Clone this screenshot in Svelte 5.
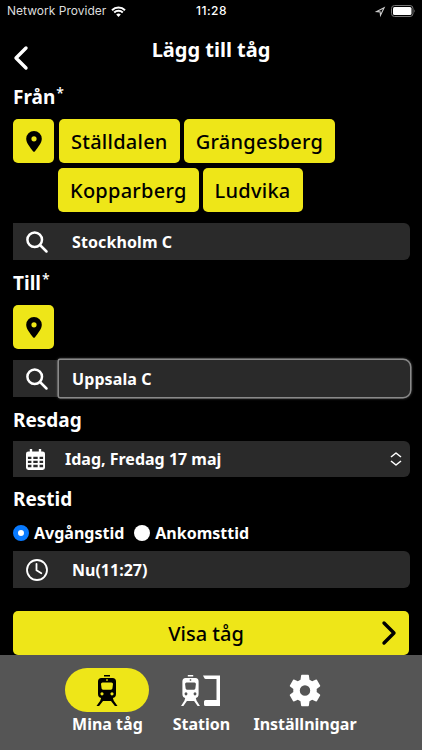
<script lang="ts">
	const fromStations = [
		['Ställdalen', 'Grängesberg'],
		['Kopparberg', 'Ludvika']
	];

	let from = $state('Stockholm C');
	let to = $state('Uppsala C');
	let timeMode = $state('departure');
	let activeTab = $state('trains');
</script>

{#snippet pin()}
	<svg class="pin" viewBox="0 0 16 21">
		<path
			fill-rule="evenodd"
			d="M8 0a7.8 7.8 0 0 0-7.8 7.8C.2 12 4 16.200 7 20.300q1 1 2 0C12 16.200 15.800 12 15.800 7.800A7.800 7.800 0 0 0 8 0zm0 5.200a2.600 2.600 0 1 1 0 5.200 2.600 2.600 0 0 1 0-5.200z"
		/>
	</svg>
{/snippet}

{#snippet search()}
	<svg class="field-icon" viewBox="0 0 22 22">
		<circle cx="8.700" cy="8.700" r="7.300" />
		<path d="M14 14l6.500 6.500" />
	</svg>
{/snippet}

{#snippet train()}
	<path
		fill-rule="evenodd"
		d="M7 0h6v1.500H7zM4.500 3h11a3.500 3.500 0 0 1 3.500 3.500V19a4 4 0 0 1-4 4H5a4 4 0 0 1-4-4V6.500A3.500 3.500 0 0 1 4.500 3zM9.200 4.300v1.500h1.600V4.300zM5.500 7.500A1.500 1.500 0 0 0 4 9l.6 4.500a1.500 1.500 0 0 0 1.400 1.200h8a1.500 1.500 0 0 0 1.400-1.200L16 9a1.500 1.500 0 0 0-1.500-1.500zM5 17.200a1.600 1.600 0 1 0 0 3.200 1.600 1.600 0 0 0 0-3.200zm10 0a1.600 1.600 0 1 0 0 3.200 1.600 1.600 0 0 0 0-3.200z"
	/>
	<path d="M4 22h12v1.500l.8 2.200L20.500 31h-2.600L14 26H6l-3.900 5H-.5l3.700-5.300.8-2.200z" />
{/snippet}

<div class="screen">
	<div class="status">
		<div class="carrier">
			<span>Network Provider</span>
			<svg class="wifi" viewBox="0 0 15 11">
				<path d="M1 4.200a9.200 9.200 0 0 1 13 0M3.200 6.500a6.100 6.100 0 0 1 8.600 0" />
				<path class="dot" d="M7.500 11L5.200 8.600a3.300 3.300 0 0 1 4.600 0z" />
			</svg>
		</div>
		<time>11:28</time>
		<div class="indicators">
			<svg class="location" viewBox="0 0 10 10"><path d="M.8 5.100L9 .9 5 9.200 4.600 5.400z" /></svg>
			<svg class="battery" viewBox="0 0 25 12">
				<rect class="case" x=".5" y=".5" width="21.500" height="11" rx="3" />
				<rect class="charge" x="2" y="2" width="18.500" height="8" rx="1.500" />
				<path d="M23.200 4.200q1.500 1.800 0 3.600z" />
			</svg>
		</div>
	</div>

	<header>
		<button class="back" aria-label="Tillbaka">
			<svg viewBox="0 0 14 24"><path d="M12 2L2 12l10 10" /></svg>
		</button>
		<h1>Lägg till tåg</h1>
	</header>

	<main>
		<h2>Från<sup>*</sup></h2>
		<div class="suggestions">
			<button class="chip position" aria-label="Position">{@render pin()}</button>
			<div class="chips">
				{#each fromStations as row}
					<div class="chip-row">
						{#each row as station}
							<button class="chip" onclick={() => (from = station)}>{station}</button>
						{/each}
					</div>
				{/each}
			</div>
		</div>
		<div class="field">
			{@render search()}
			<input bind:value={from} aria-label="Från" />
		</div>

		<h2 class="to">Till<sup>*</sup></h2>
		<button class="chip position" aria-label="Position">{@render pin()}</button>
		<div class="field second">
			{@render search()}
			<input class="focused" bind:value={to} aria-label="Till" />
		</div>

		<h2 class="day">Resdag</h2>
		<div class="field day-field">
			<svg class="calendar" viewBox="0 0 20 22">
				<path
					fill-rule="evenodd"
					d="M4 0h2.500v2.500h7V0H16v2.500h1.500A2.500 2.500 0 0 1 20 5v14.500a2.500 2.500 0 0 1-2.500 2.500h-15A2.500 2.500 0 0 1 0 19.500V5a2.500 2.500 0 0 1 2.500-2.500H4zM2 8v2.500h3.700V8zm5.700 0v2.500h4.600V8zm6.600 0v2.500H18V8zM2 12.300v2.500h3.700v-2.500zm5.700 0v2.500h4.600v-2.500zm6.600 0v2.500H18v-2.500zM2 16.600v2.500h3.700v-2.500zm5.700 0v2.500h4.600v-2.500zm6.600 0v2.500H18v-2.500z"
				/>
			</svg>
			<span class="value">Idag, Fredag 17 maj</span>
			<svg class="updown" viewBox="0 0 12 14"><path d="M1 5l5-4 5 4M1 9l5 4 5-4" /></svg>
		</div>

		<h2 class="time">Restid</h2>
		<div class="modes">
			<label>
				<input type="radio" value="departure" bind:group={timeMode} />
				Avgångstid
			</label>
			<label>
				<input type="radio" value="arrival" bind:group={timeMode} />
				Ankomsttid
			</label>
		</div>
		<div class="field time-field">
			<svg class="field-icon clock" viewBox="0 0 22 22">
				<circle cx="11" cy="11" r="10" />
				<path d="M10.500 4.800v6.400l4.800 3" />
			</svg>
			<span class="value">Nu(11:27)</span>
		</div>

		<button class="submit">
			<span>Visa tåg</span>
			<svg viewBox="0 0 14 24"><path d="M2 2l10 10L2 22" /></svg>
		</button>
	</main>

	<nav>
		<button class="tab trains" onclick={() => (activeTab = 'trains')}>
			<span class="pill" class:active={activeTab === 'trains'}>
				<svg class="train" viewBox="-1 0 22 31">{@render train()}</svg>
			</span>
			Mina tåg
		</button>
		<button class="tab station" onclick={() => (activeTab = 'station')}>
			<span class="pill" class:active={activeTab === 'station'}>
				<svg class="platform" viewBox="0 0 40 31">
					<g transform="translate(.5 0) scale(.9 1)">{@render train()}</g>
					<path d="M22 .5h17V31H24.500a1.500 1.500 0 0 1-1.500-1.500v-3a1.500 1.500 0 0 1 1.500-1.500H35.500V4H25q-1.500 0-2-1.500z" />
				</svg>
			</span>
			Station
		</button>
		<button class="tab settings" onclick={() => (activeTab = 'settings')}>
			<span class="pill" class:active={activeTab === 'settings'}>
				<svg class="gear" viewBox="2.200 2 19.600 20">
					<path
						d="M19.140 12.940c.04-.3.06-.61.06-.94 0-.32-.02-.64-.07-.94l2.030-1.580a.49.49 0 0 0 .12-.61l-1.920-3.320a.488.488 0 0 0-.59-.22l-2.390.96c-.5-.38-1.030-.7-1.620-.94l-.36-2.540a.484.484 0 0 0-.48-.41h-3.840c-.24 0-.43.17-.47.41l-.36 2.540c-.59.24-1.130.57-1.620.94l-2.390-.96a.48.48 0 0 0-.59.22L2.740 8.870c-.12.21-.08.47.12.61l2.030 1.580c-.05.3-.09.63-.09.94s.02.64.07.94l-2.030 1.580a.49.49 0 0 0-.12.61l1.920 3.320c.12.22.37.29.59.22l2.390-.96c.5.38 1.030.7 1.620.94l.36 2.540c.05.24.24.41.48.41h3.840c.24 0 .44-.17.47-.41l.36-2.540c.59-.24 1.130-.56 1.620-.94l2.390.96c.22.08.47 0 .59-.22l1.920-3.320c.12-.22.07-.47-.12-.61l-2.010-1.580zM12 15.200a3.200 3.200 0 1 1 0-6.400 3.200 3.200 0 0 1 0 6.400z"
					/>
				</svg>
			</span>
			Inställningar
		</button>
	</nav>
</div>

<style>
	:global(body) {
		background: #000;
	}

	.screen {
		display: flex;
		flex-direction: column;
		width: 422px;
		height: 750px;
		overflow: hidden;
		background: #000;
		color: #fff;
		font-family: 'Noto Sans', sans-serif;
		font-weight: 700;
	}

	button {
		padding: 0;
		border: none;
		background: none;
		color: inherit;
		font: inherit;
		cursor: pointer;
	}

	svg {
		display: block;
		flex: none;
		overflow: visible;
		fill: currentColor;
	}

	.status {
		display: grid;
		grid-template-columns: 1fr auto 1fr;
		align-items: center;
		height: 22px;
		padding: 0 6px 0 7px;
		font: 400 12px/22px Inter, sans-serif;
		letter-spacing: 0.02px;
	}

	.status time {
		font-weight: 500;
		font-size: 12px;
		letter-spacing: 0.5px;
	}

	.carrier,
	.indicators {
		display: flex;
		align-items: center;
		gap: 5px;
	}

	.carrier span {
		color: #ddd;
	}

	.indicators {
		justify-content: flex-end;
		gap: 6px;
	}

	.wifi {
		width: 15px;
		height: 11px;
		fill: none;
		stroke: #fff;
		stroke-width: 2;
	}

	.wifi .dot {
		fill: #fff;
		stroke: none;
	}

	.location {
		width: 9px;
		height: 9px;
		fill: none;
		stroke: #ccc;
		stroke-width: 1.2;
	}

	.battery {
		width: 25px;
		height: 12px;
		fill: #777;
	}

	.battery .case {
		fill: none;
		stroke: #777;
	}

	.battery .charge {
		fill: #fff;
	}

	header {
		display: grid;
		grid-template-columns: 40px 1fr 40px;
		height: 62px;
	}

	h1 {
		margin: 14px 0 0;
		font-size: 20px;
		line-height: 28px;
		text-align: center;
	}

	.back {
		width: 14px;
		height: 24px;
		margin: 24px 0 0 14px;
	}

	.back svg,
	.submit svg {
		width: 14px;
		height: 24px;
		fill: none;
		stroke: currentColor;
		stroke-width: 3.4;
		stroke-linecap: round;
		stroke-linejoin: round;
	}

	main {
		display: flex;
		flex: 1;
		flex-direction: column;
		min-height: 0;
		padding: 0 13px;
	}

	h2 {
		margin: 0;
		font-size: 19px;
		line-height: 26px;
	}

	sup {
		margin-left: 1px;
		font-size: 14px;
		font-weight: 500;
		line-height: 0;
		vertical-align: 6px;
	}

	.suggestions {
		display: flex;
		gap: 4px;
		margin-top: 9px;
	}

	.chips {
		display: flex;
		flex-direction: column;
		gap: 5px;
	}

	.chip-row {
		display: flex;
		gap: 4px;
	}

	.chip-row:first-child {
		padding-left: 1px;
	}

	.chip {
		flex: none;
		height: 44px;
		padding: 0 12px;
		border-radius: 5px;
		background: #eee618;
		color: #000;
		font-size: 20px;
		font-weight: 500;
		letter-spacing: 0.25px;
	}

	.position {
		display: grid;
		place-items: center;
		width: 41px;
		padding: 0;
	}

	.pin {
		width: 16px;
		height: 21px;
	}

	.field {
		display: flex;
		flex: none;
		align-items: center;
		width: 397px;
		height: 37px;
		margin-top: 11px;
		border-radius: 0 6px 6px 0;
		background: #2a2a2a;
		font-size: 16px;
	}

	.field-icon {
		width: 22px;
		height: 22px;
		margin: 0 10px 0 13px;
		fill: none;
		stroke: #fff;
		stroke-width: 2.500;
		stroke-linecap: round;
	}

	.field input {
		box-sizing: border-box;
		flex: 1;
		min-width: 0;
		height: 37px;
		padding: 0 14px;
		border: none;
		outline: none;
		background: none;
		color: #fff;
		font: inherit;
		letter-spacing: 0.1px;
	}

	.field .focused {
		flex: none;
		width: 351px;
		height: 37px;
		margin-left: 1px;
		padding-left: 13px;
		border-radius: 1px 7px 7px 1px;
		background: #2a2a2a;
		box-shadow: 0 0 0 1.500px #8a8a8a, 0 0 3px 1px #777;
	}

	.to {
		margin-top: 10px;
	}

	h2.to + .position {
		margin-top: 9px;
	}

	.day {
		margin-top: 10px;
	}

	.day-field {
		box-sizing: border-box;
		margin-top: 8px;
		height: 36px;
		padding: 0 8px 0 13px;
	}

	.calendar {
		width: 19px;
		height: 21px;
		margin-right: 20px;
	}

	.value {
		flex: 1;
	}

	.updown {
		width: 12px;
		height: 14px;
		fill: none;
		stroke: #fff;
		stroke-width: 1.600;
		stroke-linejoin: round;
	}

	.time {
		margin-top: 9px;
	}

	.modes {
		display: flex;
		gap: 10px;
		height: 20px;
		margin-top: 11px;
		font-size: 16px;
		line-height: 20px;
	}

	.modes label {
		display: flex;
		align-items: center;
		gap: 5px;
	}

	.modes input {
		appearance: none;
		width: 16px;
		height: 16px;
		margin: 0;
		border-radius: 50%;
		background: #fff;
	}

	.modes input:checked {
		border: 5px solid #087aff;
	}

	.time-field {
		margin-top: 8px;
	}

	.time-field .value {
		margin-left: 14px;
	}

	.clock {
		stroke-width: 1.800;
	}

	.submit {
		display: grid;
		grid-template-columns: 24px 1fr 24px;
		flex: none;
		align-items: center;
		width: 396px;
		height: 44px;
		margin-top: 23px;
		padding: 0 3px 0 0;
		border-radius: 5px;
		background: #eee618;
		color: #000;
		font-size: 20px;
		font-weight: 500;
	}

	.submit span {
		grid-column: 2;
		padding-right: 7px;
		text-align: center;
	}

	nav {
		display: flex;
		flex: none;
		justify-content: center;
		box-sizing: border-box;
		height: 95px;
		padding-top: 13px;
		background: #555;
	}

	.tab {
		display: flex;
		flex-direction: column;
		align-items: center;
		font-size: 16px;
		line-height: 25px;
	}

	.pill {
		display: grid;
		place-items: center;
		width: 84px;
		height: 44px;
		border-radius: 22px;
	}

	.pill.active {
		background: #eee618;
		color: #000;
	}

	.station {
		margin: 0 10px;
	}

	.train {
		width: 22px;
		height: 31px;
	}

	.platform {
		width: 40px;
		height: 31px;
	}

	.gear {
		width: 32px;
		height: 33px;
	}
</style>
